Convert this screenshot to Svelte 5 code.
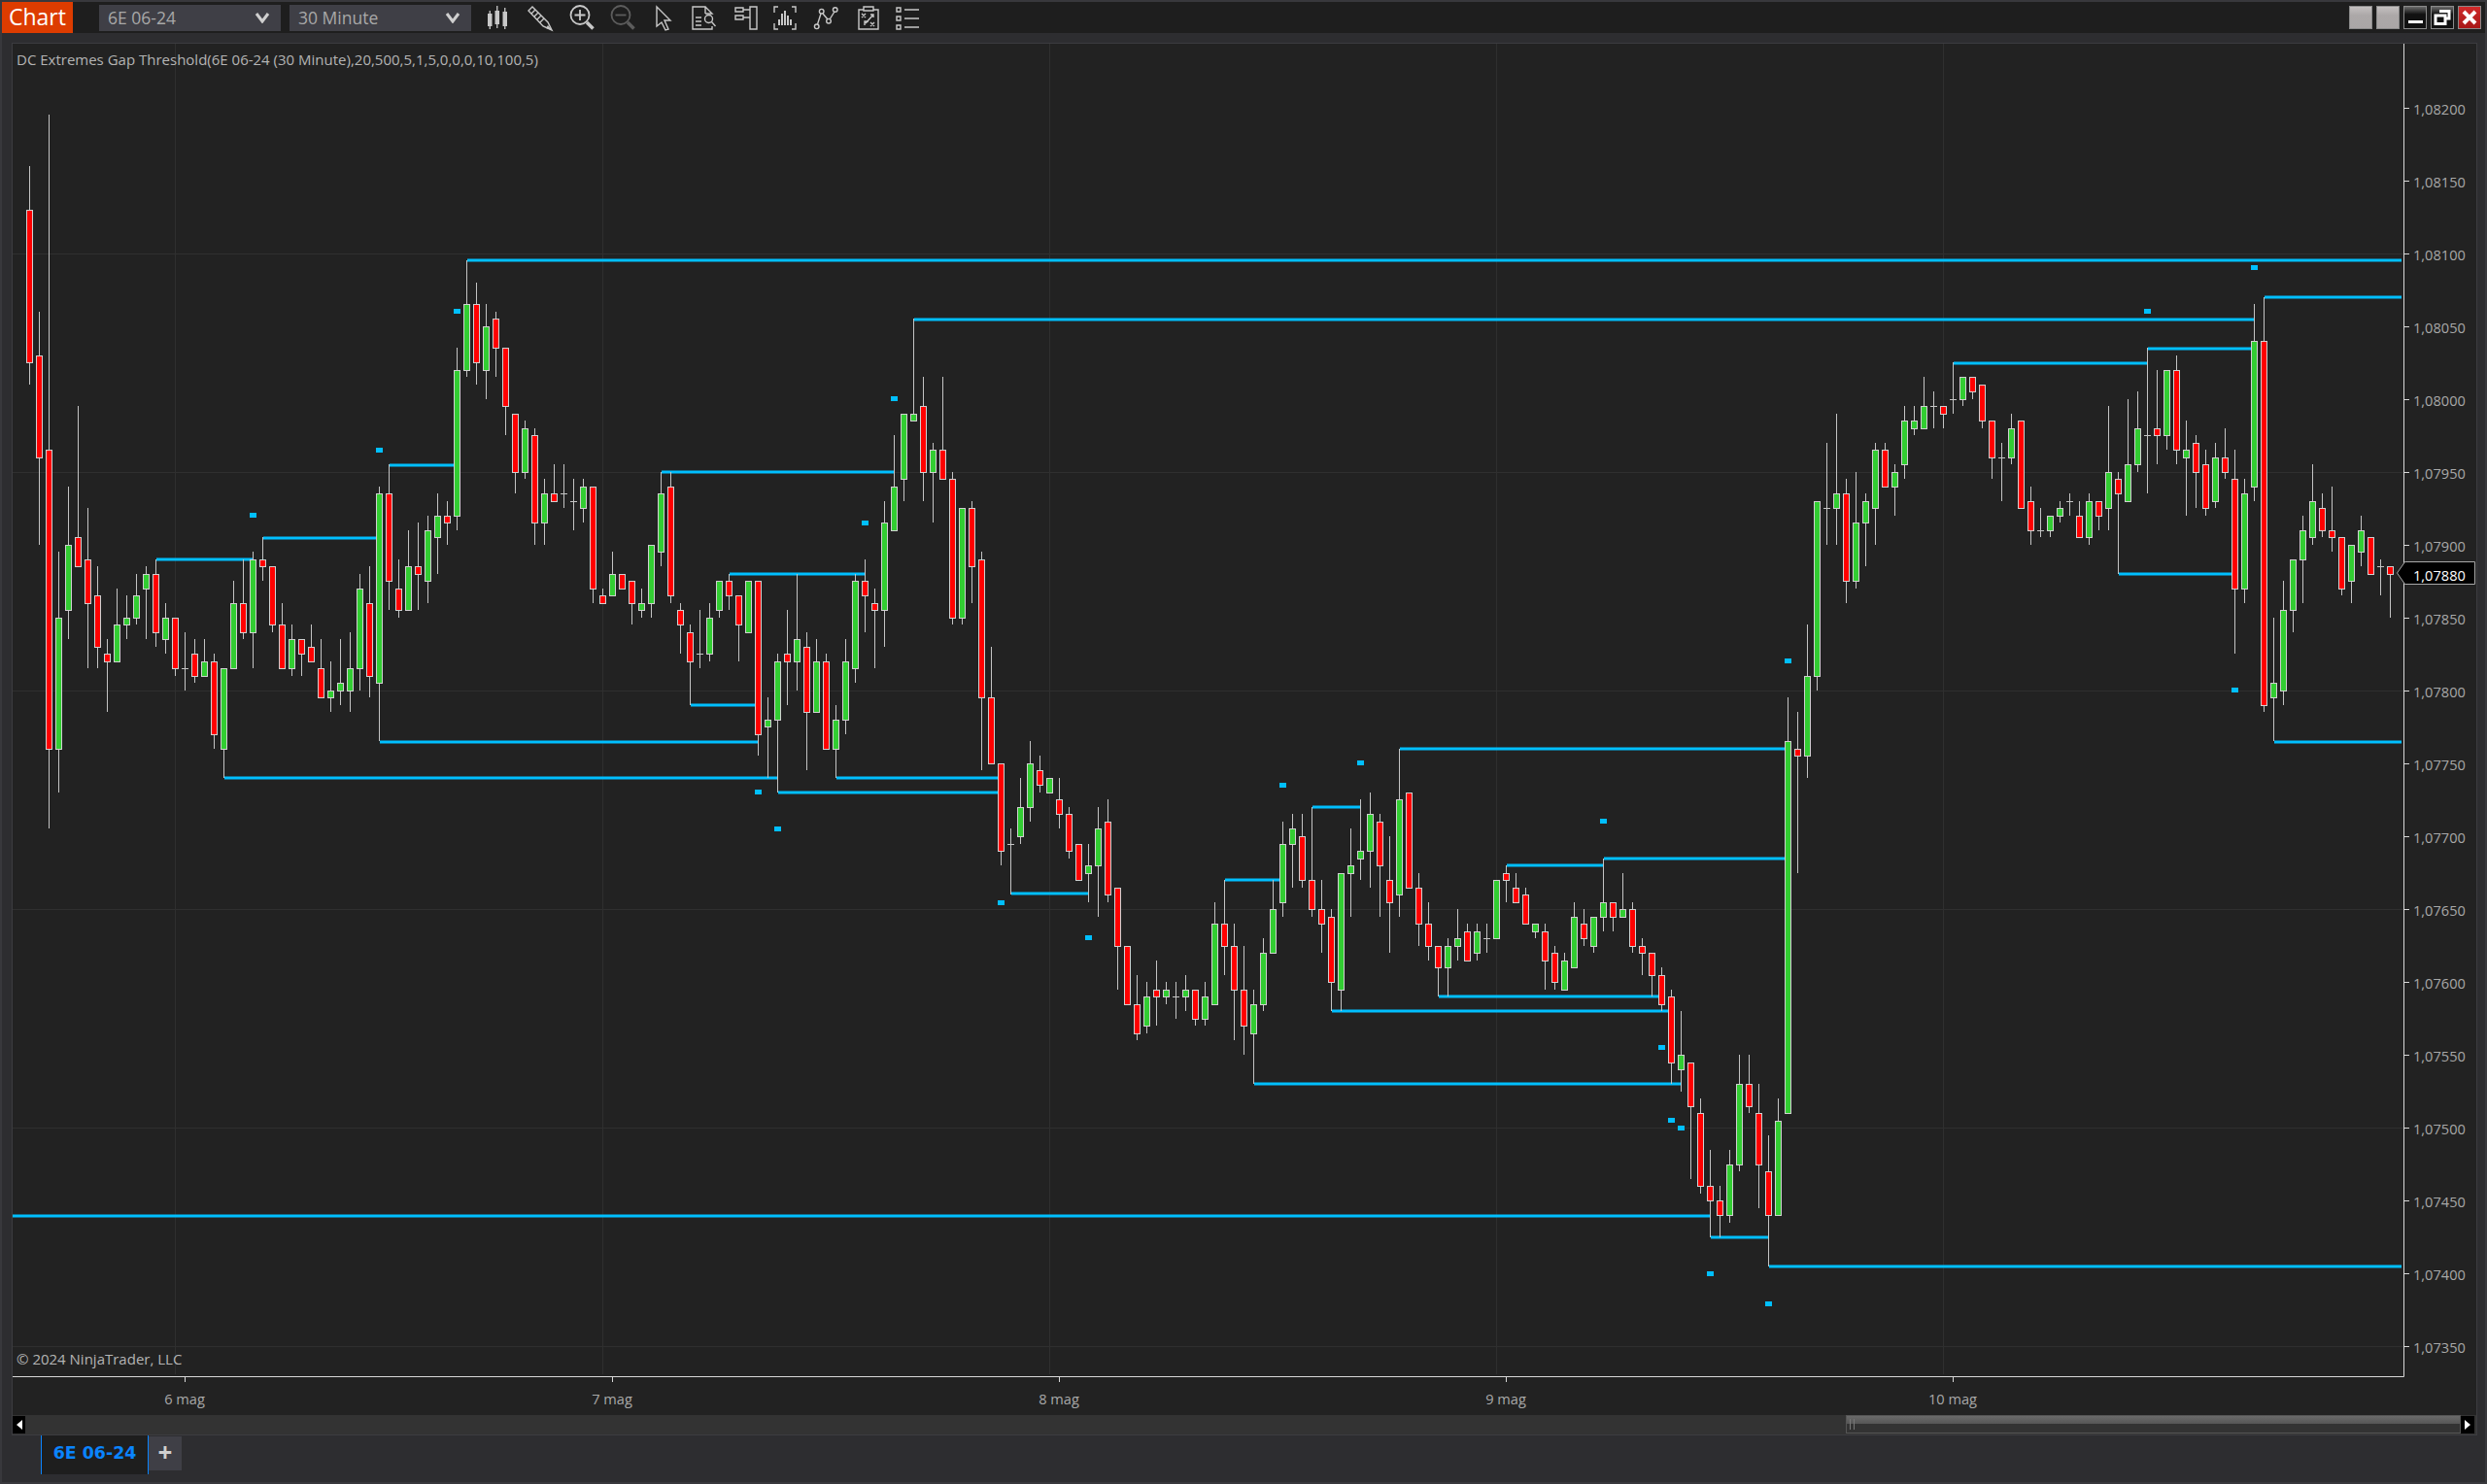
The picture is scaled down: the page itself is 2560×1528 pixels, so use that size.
<script lang="ts">
    // bars are sampled off crops of the chart, y0/s map each block back to page pixels
    const blocks = [
        { y0: 100, s: 2.063, rows: `R 146 238 564 610
R 456 548 764 950
R 37 750 1383 1555
G 968 1105 1383 1476
G 827 950 1090 1152
R 658 936 998 998
R 875 981 1074 1214
R 999 1059 1167 1214
R 1153 1183 1198 1307
G 1044 1121 1198 1198
G 1060 1105 1121 1152
G 1013 1059 1105 1121
G 999 1012 1043 1152
R 982 1012 1136 1167
G 1075 1105 1152 1183
R 1105 1105 1214 1229
D 1137 1214 1214 1260
R 1153 1183 1229 1245
G 1153 1198 1229 1229
R 1184 1198 1352 1383
G 1214 1214 1383 1445
G 1030 1074 1214 1214
R 982 1074 1136 1152
G 968 981 1136 1214
R 937 981 998 1030
R 998 998 1121 1136
R 1075 1121 1214 1214
G 1122 1152 1214 1229
R 1152 1152 1183 1229
R 1122 1167 1198 1198
R 1153 1214 1276 1276
G 1199 1260 1276 1307
G 1153 1245 1260 1292
G 1137 1214 1260 1307
G 1013 1043 1214 1260
R 999 1074 1229 1276
G 827 843 1245 1369
R 781 843 1028 1090
R 982 1043 1090 1105
G 920 998 1090 1090
R 906 998 1012 1090
G 889 919 1028 1075
G 844 888 936 1013
R 858 888 905 950
G 534 579 888 920
G 347 440 579 595
R 394 440 564 610
G 442 486 579 641
R 456 471 533 595
R 533 533 657 719
R 672 672 795 843
G 689 703 795 812
R 704 719 905 950
G 813 843 905 950
R 782 843 857 857
D 782 843 843 874
D 812 857 857 920
G 813 826 874 905
R 826 826 1043 1074
R 1044 1059 1074 1074
G 968 1012 1059 1059` },
        { y0: 300, s: 2.063, rows: `R 598 598 630 630
R 615 615 661 710
G 631 661 678 693
G 537 537 661 693
G 383 430 555 585
R 383 414 647 662
R 662 678 709 772
R 710 723 785 879
D 679 771 771 803
G 662 692 771 785
G 615 615 678 693
R 600 616 647 679
R 647 647 709 785
G 615 615 723 723
R 615 615 940 988
G 864 909 925 1034
G 771 785 909 1065
R 679 770 785 879
G 600 740 785 848
R 725 754 894 1019
G 741 785 894 894
R 771 785 971 971
G 879 909 971 1034
G 741 785 909 940
G 600 616 802 833
R 569 616 647 724
R 631 661 678 802
G 446 492 678 755
G 307 414 507 507
G 259 259 399 446
G 60 259 275 275
R 184 244 383 446
G 322 337 383 492
R 184 337 399 399
R 384 399 692 710
G 461 461 692 710
R 446 461 585 662
R 555 568 863 1018
R 755 863 1002 1002
R 1002 1002 1187 1218
D 1143 1173 1173 1280
G 1034 1094 1156 1173
G 957 1002 1095 1126
R 988 1018 1049 1065
G 1033 1033 1064 1064
R 1034 1080 1111 1142
R 1096 1111 1187 1204
R 1173 1173 1249 1249
G 1174 1218 1235 1297` },
        { y0: 720, s: 2.45, rows: `G 272 327 418 548
R 255 307 491 512
R 474 474 621 733
R 621 621 768 768
R 696 768 841 859
G 713 748 822 842
R 659 731 749 823
G 713 731 749 768
D 713 748 748 805
G 696 731 749 786
R 731 731 805 823
G 713 748 805 823
G 512 564 768 768
R 455 564 621 696
R 566 621 731 859
R 622 731 822 896
G 733 768 842 969
G 603 638 768 786
G 455 528 638 638
G 309 364 511 548
G 292 327 364 474
R 292 344 455 474
R 272 455 528 548
R 456 528 565 639
R 529 547 712 786
G 437 437 731 786
G 328 418 437 548
G 255 381 401 456
G 235 290 381 474
R 292 307 418 548
R 345 455 511 639
G 124 253 491 548
R 234 234 474 474
R 439 474 565 622
R 512 565 621 659
R 621 621 675 749
G 603 621 675 749
G 529 601 621 659
R 566 584 658 658
G 566 584 638 659
D 566 601 601 639
G 455 455 601 601
R 420 437 455 512
R 439 474 511 511
R 475 491 565 565
G 565 565 584 603
R 566 584 658 733
R 622 638 712 733
G 639 658 731 731
G 512 547 675 675
R 529 564 601 621
G 547 547 621 639
G 403 511 548 585
R 511 511 547 585
G 439 528 547 547
R 512 528 621 639
R 603 621 638 696
R 638 638 694 749
R 676 694 768 786
R 733 748 915 969
G 786 896 932 989
R 915 915 1025 1210` },
        { y0: 760, s: 2.8, rows: `R 1039 1079 1293 1312
R 1187 1292 1335 1438
R 1294 1334 1377 1438
G 1187 1227 1377 1397
G 913 995 1228 1252
R 913 995 1060 1081
R 997 1079 1228 1355
R 1145 1250 1377 1522
G 1039 1101 1377 1377
G -115 10 1080 1080` },
        { y0: 240, s: 2.529, rows: `R 1249 1341 1362 1666
G 1022 1152 1362 1418
G 696 696 1152 1190
D 546 717 717 812
G 470 679 717 812
R 642 679 906 963
G 622 755 906 925
G 680 696 755 869
G 546 565 717 812
R 546 565 659 659
G 604 621 659 736
G 453 489 603 642
G 453 489 507 528
G 377 451 507 508
D 415 451 451 508
R 451 451 469 508
D 339 431 431 470
G 375 375 431 453
R 375 375 413 432
R 393 393 489 508
R 489 489 583 642
D 546 583 583 698
G 470 507 583 604
R 489 489 717 717
R 660 696 772 812
D 718 772 772 794
G 734 734 772 794
G 698 717 734 756
D 680 696 696 736
R 698 734 793 793
G 680 696 793 812
R 696 696 734 774
G 453 621 717 774
R 622 641 679 887
G 432 603 696 696
G 415 507 603 622
D 300 527 527 680
R 358 507 527 604
G 355 355 527 566
R 319 355 565 604
G 491 565 583 736
R 530 545 621 718
R 567 603 717 736
G 546 583 696 718
R 508 583 621 642
R 567 641 925 1098
G 642 679 925 964
G 187 279 659 698
R 167 279 1228 1249
G 1001 1171 1210 1324
G 908 982 1190 1229
G 849 849 982 1039
G 736 772 849 964
G 604 696 793 812
R 680 717 772 794
R 660 772 793 832
R 793 793 925 946
G 810 810 906 964
G 736 772 831 869
R 793 793 887 887
D 850 869 869 946
R 869 869 887 1000` },
    ];

    const TICK = 7.505;
    const TOP = 110.5;
    // prices move in ticks, so snap every sampled value back on to the tick grid
    const snap = (y: number) => Math.round(TOP + Math.round((y - TOP) / TICK) * TICK);

    const bars = blocks.flatMap((b) =>
        b.rows.split('\n').map((row) => {
            const [kind, ...vals] = row.trim().split(' ');
            const [hi, top, bot, lo] = vals.map((v) => snap(b.y0 + Number(v) / b.s));
            return { kind, hi, top, bot, lo };
        })
    ).map((b, i) => ({ ...b, x: 30 + i * 10 }));

    const levels = [
        [481, 2472, 268], [161, 260, 576], [271, 387, 554], [401, 467, 479], [391, 780, 764],
        [231, 800, 801], [681, 920, 486], [751, 890, 591], [711, 778, 726], [941, 2320, 329],
        [861, 1027, 801], [801, 1027, 816], [1041, 1120, 920], [1261, 1318, 906], [1351, 1400, 831],
        [1441, 1840, 771], [1481, 1708, 1026], [1371, 1718, 1041], [1291, 1730, 1116], [1551, 1650, 891],
        [1651, 1840, 884], [13, 1760, 1252], [1761, 1820, 1274], [1821, 2472, 1304], [2011, 2210, 374],
        [2211, 2317, 359], [2331, 2472, 306], [2181, 2297, 591], [2341, 2472, 764],
    ];

    const dots = [
        [470, 320], [390, 463], [260, 530], [920, 410], [890, 538], [780, 815], [800, 853],
        [1030, 929], [1120, 965], [1400, 785], [1320, 808], [1650, 845], [1710, 1078], [1720, 1153],
        [1730, 1161], [1760, 1311], [1820, 1342], [1840, 680], [2210, 320], [2320, 275], [2300, 710],
    ];

    const prices = Array.from({ length: 18 }, (_, i) => ({
        y: Math.round(TOP + i * 75.05),
        label: (1.082 - i * 0.0005).toFixed(5).replace('.', ','),
    }));

    const gridY = [261, 486, 711, 936, 1161, 1386];
    const gridX = [180, 620, 1080, 1540, 2000];
    const dates = [[190, '6 mag'], [630, '7 mag'], [1090, '8 mag'], [1550, '9 mag'], [2010, '10 mag']];
</script>

<div class="app">
    <header class="toolbar">
        <div class="brand">Chart</div>
        <div class="select first"><span>6E 06-24</span><svg width="16" height="12" viewBox="0 0 16 12"><path d="M2 2 L8 10 L14 2" /></svg></div>
        <div class="select"><span>30 Minute</span><svg width="16" height="12" viewBox="0 0 16 12"><path d="M2 2 L8 10 L14 2" /></svg></div>
        <div class="tools">
            <svg class="tool" viewBox="0 0 30 30"><g class="solid"><rect x="3" y="11" width="4.5" height="13" /><rect x="4.6" y="8" width="1.3" height="19" /><rect x="10.5" y="8" width="4.5" height="14" /><rect x="12.1" y="3" width="1.3" height="23" /><rect x="18.5" y="9" width="4.5" height="15" /><rect x="20.1" y="5" width="1.3" height="22" /></g></svg>
            <svg class="tool" viewBox="0 0 30 30"><path class="line" d="M3 8 L7 4 L23 20 L27 28 L18 24 Z M6 11 L10 7 M9 14 L13 10 M12 17 L16 13 M15 20 L19 16" /><path class="solid" d="M23 23 L27 28 L21 26 Z" /></svg>
            <svg class="tool" viewBox="0 0 30 30"><circle class="line thick" cx="14" cy="12.5" r="9.5" /><path class="line thick" d="M14 7 V18 M8.5 12.5 H19.5" /><path class="line heavy" d="M21 20 L27.5 26.5" /></svg>
            <svg class="tool dim" viewBox="0 0 30 30"><circle class="line thick" cx="14" cy="12.5" r="9.5" /><path class="line thick" d="M8.5 12.5 H19.5" /><path class="line heavy" d="M21 20 L27.5 26.5" /></svg>
            <svg class="tool" viewBox="0 0 30 30"><path class="line" d="M9 4 L23 18 L17 18 L21 27 L18 28 L14 20 L9 24 Z" /></svg>
            <svg class="tool" viewBox="0 0 30 30"><path class="line" d="M17 11 V4 H4 V27 H24 V24 M17 4 L24 11 H17 M7 15 H13 M7 19 H13 M7 23 H13" /><circle class="line" cx="20.5" cy="16.5" r="4" /><path class="line" d="M23.5 19.5 L27.5 24" /></svg>
            <svg class="tool" viewBox="0 0 30 30"><path class="line" d="M6 5 H14 V9 H6 Z M6 13 H14 V17 H6 Z M14 7 H21 M14 15 H21 M21 4 H28 V27 H21 Z" /></svg>
            <svg class="tool" viewBox="0 0 30 30"><path class="line" d="M8 4 H4 V10 M22 4 H26 V10 M4 21 V27 H8 M26 21 V27 H22" /><g class="solid"><rect x="8" y="17" width="2" height="6" /><rect x="11" y="11" width="2" height="12" /><rect x="14" y="8" width="2" height="15" /><rect x="17" y="13" width="2" height="10" /><rect x="20" y="17" width="2" height="6" /></g></svg>
            <svg class="tool" viewBox="0 0 30 30"><path class="line" d="M6.5 22 L10 11 M12 11 L17 17 M19 17 L24 9" /><circle class="line" cx="5.7" cy="24.3" r="2.3" /><circle class="line" cx="10.7" cy="8.7" r="2.3" /><circle class="line" cx="18" cy="18.7" r="2.3" /><circle class="line" cx="24.7" cy="7" r="2.3" /></svg>
            <svg class="tool" viewBox="0 0 30 30"><path class="line" d="M12 7 H7 V27 H27 V7 H22 M12 4 H22 V8 H12 Z M10 11 L14 15 M14 11 L10 15 M13 23 V19 H17 M14 21 L22 12 M19 12 H22 V15 M19 20 L23 24 M23 20 L19 24" /></svg>
            <svg class="tool" viewBox="0 0 30 30"><path class="line" d="M4 5 H8 V9 H4 Z M4 14 H8 V18 H4 Z M4 23 H8 V27 H4 Z M12 7 H27 M12 16 H27 M12 25 H27" /></svg>
        </div>
        <div class="window">
            <button class="win plain" aria-label="tile"></button>
            <button class="win plain" aria-label="link"></button>
            <button class="win dark" aria-label="minimize"><span class="bar"></span></button>
            <button class="win dark" aria-label="restore"><svg width="18" height="16" viewBox="0 0 18 16"><path d="M6 1.5 H16 V9 H12 M2 6 H12 V14.5 H2 Z" /></svg></button>
            <button class="win close" aria-label="close"><svg width="16" height="16" viewBox="0 0 16 16"><path d="M2 2 L14 14 M14 2 L2 14" /></svg></button>
        </div>
    </header>

    <section class="panel">
        <svg class="chart" width="2536" height="1412" viewBox="13 45 2536 1412">
            {#each gridY as y}
                <rect class="grid" x="13" y={y} width="2461" height="1" />
            {/each}
            {#each gridX as x}
                <rect class="grid" x={x} y="45" width="1" height="1370" />
            {/each}

            {#each levels as [a, b, y]}
                <line class="level" x1={a} x2={b} y1={y} y2={y} />
            {/each}
            {#each dots as [x, y]}
                <rect class="dot" x={x - 3} y={y - 2} width="7" height="5" />
            {/each}

            {#each bars as b}
                <rect class="wick" x={b.x} y={b.hi} width="1" height={Math.max(b.lo - b.hi, 1)} />
                {#if b.kind === 'D'}
                    <rect class="wick" x={b.x - 3} y={b.top} width="7" height="1" />
                {:else}
                    <rect class="body {b.kind === 'R' ? 'down' : 'up'}" x={b.x - 2.5} y={b.top + 0.5} width="6" height={b.bot - b.top} />
                {/if}
            {/each}

            <text class="legend" x="17" y="67">DC Extremes Gap Threshold(6E 06-24 (30 Minute),20,500,5,1,5,0,0,0,10,100,5)</text>
            <text class="legend" x="17" y="1405">© 2024 NinjaTrader, LLC</text>

            <path class="axis" d="M13 1417.5 H2474.5 V45" />
            {#each prices as p}
                <rect class="tick" x="2475" y={p.y} width="5" height="1" />
                <text class="price" x="2484" y={p.y + 7}>{p.label}</text>
            {/each}
            {#each dates as [x, label]}
                <rect class="tick" x={x} y="1418" width="1" height="5" />
                <text class="date" x={x} y="1446" text-anchor="middle">{label}</text>
            {/each}

            <path class="last" d="M2467.5 590 L2475.5 578.5 H2547.5 V601.5 H2475.5 Z" />
            <text class="price current" x="2484" y="598">1,07880</text>
        </svg>
        <div class="scroll">
            <div class="arrow"><svg width="6" height="10" viewBox="0 0 6 10"><path d="M6 0 V10 L0 5 Z" /></svg></div>
            <div class="track">
                <div class="thumb"><i></i><i></i></div>
            </div>
            <div class="arrow right"><svg width="6" height="10" viewBox="0 0 6 10"><path d="M0 0 V10 L6 5 Z" /></svg></div>
        </div>
    </section>

    <nav class="tabs">
        <div class="tab">6E 06-24</div>
        <div class="add">+</div>
    </nav>
</div>

<style>
    :global(body) {
        margin: 0;
        background: #2d2d30;
    }
    .app {
        width: 2560px;
        height: 1528px;
        box-sizing: border-box;
        border: 2px solid #38383c;
        background: #2d2d30;
        display: flex;
        flex-direction: column;
        font-family: "Open Sans", "Liberation Sans", sans-serif;
        overflow: hidden;
    }
    .toolbar {
        height: 32px;
        flex: none;
        background: #1e1e1e;
        display: flex;
        align-items: center;
        position: relative;
    }
    .brand {
        width: 73px;
        height: 32px;
        background: #dd3c00;
        color: #fff;
        font-size: 23px;
        line-height: 30px;
        text-align: center;
    }
    .select {
        width: 187px;
        height: 27px;
        margin-left: 9px;
        padding: 0 11px 0 9px;
        box-sizing: border-box;
        background: #3f3f46;
        color: #a8a8a8;
        font-size: 17.5px;
        display: flex;
        align-items: center;
        justify-content: space-between;
    }
    .select.first {
        margin-left: 27px;
    }
    .select path {
        fill: none;
        stroke: #cfcfcf;
        stroke-width: 3;
    }
    .tools {
        display: flex;
        margin-left: 14px;
        gap: 12px;
    }
    .tool {
        width: 30px;
        height: 30px;
        color: #c8c8c8;
    }
    .tool.dim {
        color: #5c5c5c;
    }
    .line {
        fill: none;
        stroke: currentColor;
        stroke-width: 1.4;
    }
    .line.thick {
        stroke-width: 1.8;
    }
    .line.heavy {
        stroke-width: 3.6;
    }
    .solid {
        fill: currentColor;
    }
    .window {
        margin-left: auto;
        margin-right: 4px;
        display: flex;
        gap: 4px;
    }
    .win {
        width: 24px;
        height: 24px;
        padding: 0;
        box-sizing: border-box;
        border: 1px solid #8a8a8a;
        display: flex;
        align-items: center;
        justify-content: center;
    }
    .win.plain {
        background: linear-gradient(#c4c0c0, #aca8a8 40%, #aaa6a6);
    }
    .win.dark {
        background: linear-gradient(#6a6a6a, #111 35%, #111);
    }
    .win.close {
        background: linear-gradient(#d02a2a, #a81818);
    }
    .bar {
        width: 15px;
        height: 3px;
        background: #fff;
        margin-top: 9px;
    }
    .win svg path {
        fill: none;
        stroke: #fff;
        stroke-width: 3;
    }
    .win.close svg path {
        stroke-width: 4;
    }
    .panel {
        margin: 10px 8px 0 10px;
        height: 1434px;
        flex: none;
        box-sizing: border-box;
        border: 1px solid #3c3c40;
        display: flex;
        flex-direction: column;
    }
    .chart {
        display: block;
        flex: none;
        background: #222222;
    }
    .grid {
        fill: #2f2f2f;
    }
    .level {
        stroke: #00bfff;
        stroke-width: 3;
    }
    .dot {
        fill: #00bfff;
    }
    .wick {
        fill: #c4c4c4;
    }
    .body {
        stroke: #d0d0d0;
        stroke-width: 1;
        shape-rendering: crispEdges;
    }
    .body.up {
        fill: #32cd32;
    }
    .body.down {
        fill: #ff0000;
    }
    .axis {
        fill: none;
        stroke: #d8d8d8;
        stroke-width: 1;
    }
    .tick {
        fill: #d8d8d8;
    }
    .legend,
    .date,
    .price {
        font-family: "Open Sans", "Liberation Sans", sans-serif;
        font-size: 14.6px;
        fill: #a8a8a8;
    }
    .legend {
        font-size: 15px;
        fill: #b4b4b4;
    }
    .last {
        fill: #000;
        stroke: #a8a8a8;
        stroke-width: 1;
    }
    .price.current {
        fill: #fff;
    }
    .scroll {
        height: 20px;
        flex: none;
        box-sizing: border-box;
        padding: 1px 2px 1px 0;
        background: #333333;
        display: flex;
    }
    .arrow {
        width: 13px;
        flex: none;
        background: #000;
        display: flex;
        align-items: center;
        justify-content: center;
    }
    .arrow.right {
        width: 14px;
    }
    .arrow path {
        fill: #fff;
    }
    .track {
        flex: 1;
        display: flex;
        justify-content: flex-end;
    }
    .thumb {
        width: 633px;
        box-sizing: border-box;
        border: 1px solid #555;
        margin-top: -1px;
        background: linear-gradient(#6a6a6a, #555 50%, #333 50%, #333);
        display: flex;
        align-items: center;
        gap: 3px;
        padding-left: 3px;
    }
    .thumb i {
        width: 1px;
        height: 11px;
        background: #777;
    }
    .tabs {
        display: flex;
        padding-left: 40px;
    }
    .tab {
        width: 111px;
        height: 40px;
        box-sizing: border-box;
        border-left: 1px solid #0a84ff;
        border-right: 1px solid #0a84ff;
        background: #1e1e1e;
        color: #0a84ff;
        font-size: 17.4px;
        font-weight: 700;
        line-height: 36px;
        text-align: center;
        font-family: "DejaVu Sans", sans-serif;
    }
    .add {
        width: 34px;
        height: 35px;
        margin-top: 1px;
        background: #3f3f46;
        color: #cfcfcf;
        font-size: 26px;
        font-weight: 700;
        line-height: 32px;
        text-align: center;
    }
</style>
